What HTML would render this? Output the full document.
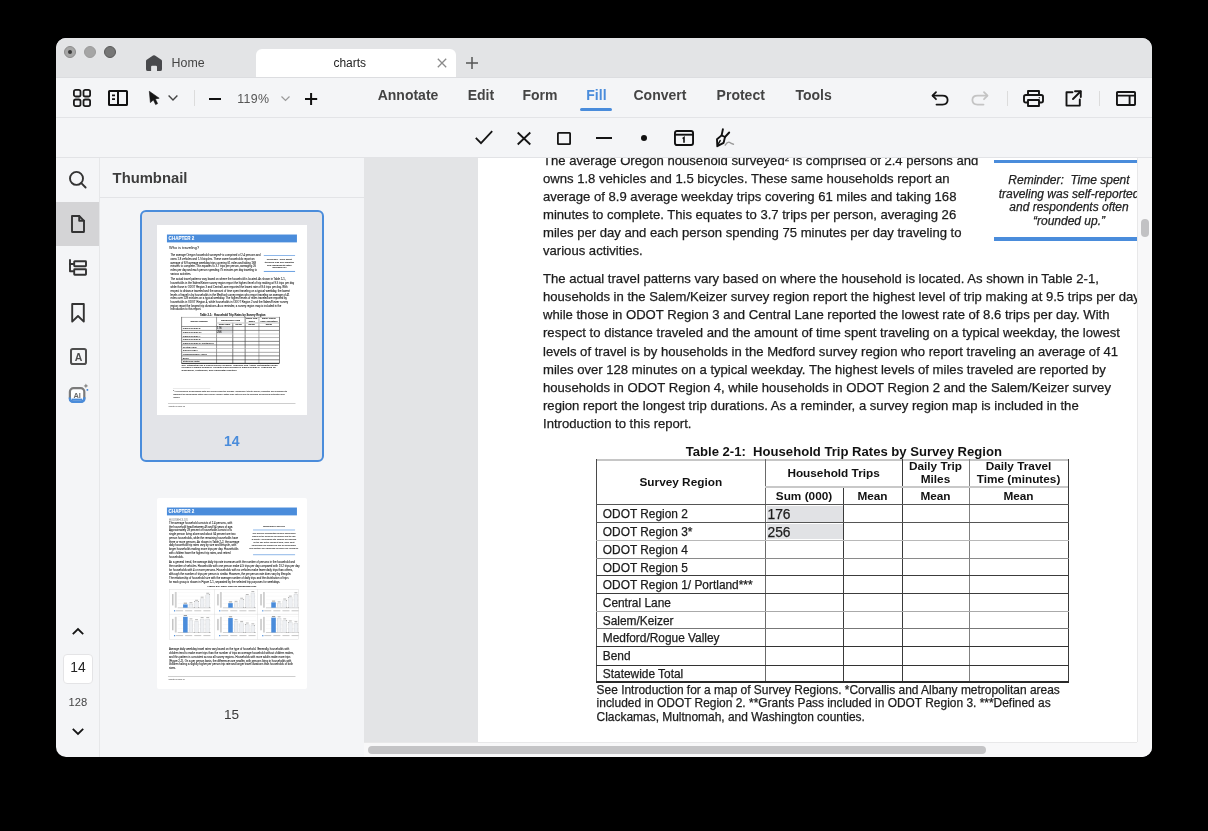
<!DOCTYPE html>
<html><head><meta charset="utf-8">
<style>
*{margin:0;padding:0;box-sizing:border-box}
html,body{width:1208px;height:831px;background:#000;overflow:hidden;font-family:"Liberation Sans",sans-serif}
#win{position:absolute;left:56px;top:38px;width:1096px;height:719px;border-radius:10px;overflow:hidden;background:#f4f5f7}
#in{position:absolute;left:-56px;top:-38px;width:1208px;height:831px;will-change:transform}
.a{position:absolute}
.t{position:absolute;white-space:nowrap;line-height:1}
svg{position:absolute;overflow:visible}
.th .t{-webkit-text-stroke:0.3px currentColor}
.pg .t:not([style*="font-weight:bold"]){-webkit-text-stroke:0.25px currentColor}
</style></head><body>
<div id="win"><div id="in">
<div class="a" style="left:56px;top:38px;width:1096px;height:40px;background:#e3e4e6;"></div>
<div class="a" style="left:56px;top:77px;width:1096px;height:1px;background:#dcdde0;"></div>
<div class="a" style="left:64px;top:46px;width:12px;height:12px;border-radius:50%;background:#a6a6a6;border:1px solid #8c8c8c"></div>
<div class="a" style="left:68px;top:50px;width:4px;height:4px;border-radius:50%;background:#3a3a3a"></div>
<div class="a" style="left:84px;top:46px;width:12px;height:12px;border-radius:50%;background:#a5a5a5;border:1px solid #9b9b9b"></div>
<div class="a" style="left:104px;top:46px;width:12px;height:12px;border-radius:50%;background:#767676;border:1px solid #595959"></div>
<svg style="left:146px;top:54.7px" width="16" height="16.2" viewBox="0 0 16 16.2"><path d="M7 0.5 Q8 -0.2 9 0.5 L15.3 4.8 Q16 5.3 16 6.2 V14.2 Q16 16.1 14.1 16.1 H11 V11.8 Q11 10.7 9.9 10.7 H6.1 Q5.1 10.7 5.1 11.8 V16.1 H1.9 Q0 16.1 0 14.2 V6.2 Q0 5.3 0.7 4.8 Z" fill="#48494c"/></svg>
<div class="t" style="left:171.60px;top:56.50px;font-size:12.4px;color:#444;font-weight:normal;font-style:normal;">Home</div>
<div class="a" style="left:256px;top:49px;width:200px;height:28px;background:#ffffff;border-radius:6px 6px 0 0"></div>
<div class="t" style="left:333.40px;top:57.04px;font-size:12px;color:#222;font-weight:normal;font-style:normal;">charts</div>
<svg style="left:437px;top:58px" width="10" height="10" viewBox="0 0 10 10"><path d="M0.8 0.8 L9.2 9.2 M9.2 0.8 L0.8 9.2" stroke="#8a8a8a" stroke-width="1.3" fill="none"/></svg>
<svg style="left:466px;top:57px" width="12" height="12" viewBox="0 0 12 12"><path d="M6 0 V12 M0 6 H12" stroke="#555" stroke-width="1.5" fill="none"/></svg>
<div class="a" style="left:56px;top:117px;width:1096px;height:1px;background:#e3e4e7;"></div>
<svg style="left:73px;top:89px" width="18" height="18" viewBox="0 0 18 18" fill="none" stroke="#1a1a1a" stroke-width="1.8"><rect x="0.9" y="0.9" width="6.6" height="6.6" rx="1.8"/><rect x="10.5" y="0.9" width="6.6" height="6.6" rx="1.8"/><rect x="0.9" y="10.5" width="6.6" height="6.6" rx="1.8"/><rect x="10.5" y="10.5" width="6.6" height="6.6" rx="1.8"/></svg>
<svg style="left:108px;top:90px" width="20" height="16" viewBox="0 0 20 16" fill="none" stroke="#111" stroke-width="2"><rect x="1" y="1" width="18" height="14" rx="0.6"/><path d="M10 1 V15"/><path d="M4 5.4 H7 M4 9.1 H7" stroke-width="1.6"/></svg>
<svg style="left:149px;top:91px" width="11" height="14" viewBox="0 0 11 14"><path d="M0.3 0.3 L10.2 7.2 L6.3 7.9 L8.6 12.6 L6.6 13.6 L4.4 8.9 L1.4 11.6 Z" fill="#151515" stroke="#151515" stroke-width="0.6" stroke-linejoin="round"/></svg>
<svg style="left:167.5px;top:95.4px" width="10" height="5.5" viewBox="0 0 10 5.5"><path d="M0.6 0.6 L5 5 L9.4 0.6" stroke="#444" stroke-width="1.4" fill="none"/></svg>
<div class="a" style="left:193.5px;top:90px;width:1px;height:15.5px;background:#dcdcdc;"></div>
<div class="a" style="left:208.7px;top:97.6px;width:12.3px;height:2.1px;background:#111;"></div>
<div class="t" style="left:237.30px;top:92.80px;font-size:12.4px;color:#555;font-weight:normal;font-style:normal;letter-spacing:0.3px">119%</div>
<svg style="left:280.5px;top:95.7px" width="9" height="5" viewBox="0 0 9 5"><path d="M0.5 0.5 L4.5 4.5 L8.5 0.5" stroke="#9a9a9a" stroke-width="1.2" fill="none"/></svg>
<svg style="left:304.8px;top:92.6px" width="12.2" height="12" viewBox="0 0 12.2 12"><path d="M6.1 0 V12 M0 6 H12.2" stroke="#111" stroke-width="2" fill="none"/></svg>
<div class="t" style="left:377.70px;top:88.15px;font-size:14px;color:#444;font-weight:bold;font-style:normal;">Annotate</div>
<div class="t" style="left:467.70px;top:88.15px;font-size:14px;color:#444;font-weight:bold;font-style:normal;">Edit</div>
<div class="t" style="left:522.50px;top:88.15px;font-size:14px;color:#444;font-weight:bold;font-style:normal;">Form</div>
<div class="t" style="left:633.50px;top:88.15px;font-size:14px;color:#444;font-weight:bold;font-style:normal;">Convert</div>
<div class="t" style="left:716.60px;top:88.15px;font-size:14px;color:#444;font-weight:bold;font-style:normal;">Protect</div>
<div class="t" style="left:795.50px;top:88.15px;font-size:14px;color:#444;font-weight:bold;font-style:normal;">Tools</div>
<div class="t" style="left:586.30px;top:88.15px;font-size:14px;color:#4a8cdb;font-weight:bold;font-style:normal;">Fill</div>
<div class="a" style="left:580px;top:108px;width:32px;height:3px;background:#4a8cdb;border-radius:1.5px"></div>
<svg style="left:931px;top:91px" width="18" height="15" viewBox="0 0 18 15" fill="none" stroke="#151515" stroke-width="1.8" stroke-linecap="round" stroke-linejoin="round"><path d="M5 1.2 L1.5 4.7 L5 8.2"/><path d="M1.8 4.7 H11.5 Q16.6 4.7 16.6 9.1 Q16.6 13.6 11.5 13.6 H5.5"/></svg>
<svg style="left:971px;top:91px" width="18" height="15" viewBox="0 0 18 15" fill="none" stroke="#c4c4c4" stroke-width="1.8" stroke-linecap="round" stroke-linejoin="round"><path d="M13 1.2 L16.5 4.7 L13 8.2"/><path d="M16.2 4.7 H6.5 Q1.4 4.7 1.4 9.1 Q1.4 13.6 6.5 13.6 H12.5"/></svg>
<div class="a" style="left:1006.5px;top:90.5px;width:1px;height:15px;background:#dcdcdc;"></div>
<svg style="left:1022.5px;top:89.5px" width="21" height="17" viewBox="0 0 21 17" fill="none" stroke="#151515" stroke-width="1.9" stroke-linejoin="round"><path d="M5 5 V1 H16 V5"/><path d="M5 12.5 H2.8 Q1 12.5 1 10.7 V6.8 Q1 5 2.8 5 H18.2 Q20 5 20 6.8 V10.7 Q20 12.5 18.2 12.5 H16"/><rect x="5" y="10" width="11" height="6"/><circle cx="16.3" cy="7.8" r="0.7" fill="#151515" stroke="none"/></svg>
<svg style="left:1065px;top:89.5px" width="17" height="17" viewBox="0 0 17 17" fill="none" stroke="#151515" stroke-width="1.9" stroke-linejoin="round" stroke-linecap="round"><path d="M7.5 2.3 H1.5 V15.6 H14.8 V9.5"/><path d="M8 9 L15.5 1.5"/><path d="M10 1.2 H15.8 V7"/></svg>
<div class="a" style="left:1099px;top:90.5px;width:1px;height:15px;background:#dcdcdc;"></div>
<svg style="left:1116px;top:90.5px" width="20" height="15" viewBox="0 0 20 15" fill="none" stroke="#151515" stroke-width="1.9"><rect x="0.95" y="0.95" width="18.1" height="13.1" rx="0.8"/><path d="M1 4.6 H19 M13.6 4.6 V14"/></svg>
<div class="a" style="left:56px;top:157px;width:1096px;height:1px;background:#e2e3e6;"></div>
<svg style="left:475px;top:130px" width="18" height="15" viewBox="0 0 18 15"><path d="M0.8 7.8 L6 13.2 L17.2 1.2" stroke="#151515" stroke-width="1.8" fill="none"/></svg>
<svg style="left:517px;top:131.5px" width="14" height="13" viewBox="0 0 14 13"><path d="M0.7 0.5 L13.3 12.5 M13.3 0.5 L0.7 12.5" stroke="#151515" stroke-width="1.8" fill="none"/></svg>
<svg style="left:557px;top:131.5px" width="14" height="13" viewBox="0 0 14 13"><rect x="0.9" y="0.9" width="12.2" height="11.2" rx="0.6" stroke="#151515" stroke-width="1.8" fill="none"/></svg>
<div class="a" style="left:596px;top:136.9px;width:16.2px;height:1.9px;background:#151515;"></div>
<div class="a" style="left:641px;top:135px;width:6px;height:6px;border-radius:50%;background:#111"></div>
<svg style="left:674px;top:130px" width="20" height="16" viewBox="0 0 20 16" fill="none" stroke="#111" stroke-width="1.9"><rect x="0.95" y="0.95" width="18.1" height="14.1" rx="2"/><path d="M1 4.7 H19"/><path d="M8.6 8.6 L10 7.6 V12.8" stroke-width="1.6"/></svg>
<svg style="left:710px;top:125px" width="30" height="25" viewBox="0 0 30 25" fill="none" stroke-linecap="round" stroke-linejoin="round"><path d="M12.9 4.2 L11.6 10.4 M19.2 7.5 L15 12" stroke="#111" stroke-width="1.9"/><path d="M11.6 10.4 L15 12 L13.6 17.8 L7.3 21.2 L7 14.3 Z" stroke="#111" stroke-width="1.9"/><path d="M10.2 15.6 L7.9 19.6" stroke="#111" stroke-width="1.5"/><path d="M15.2 20.2 Q17.6 16.4 19.4 17.3 Q21 18.8 23.5 19.2" stroke="#9a9a9a" stroke-width="1.4"/></svg>
<div class="a" style="left:99px;top:158px;width:1px;height:599px;background:#e6e7e9;"></div>
<div class="a" style="left:56px;top:202px;width:43px;height:44px;background:#d4d4d6;"></div>
<svg style="left:69px;top:171px" width="18" height="18" viewBox="0 0 18 18" fill="none" stroke="#333" stroke-width="1.9" stroke-linecap="round" stroke-linejoin="round"><circle cx="7.5" cy="7.4" r="6.5"/><path d="M12.3 12.2 L16.6 16.5"/></svg>
<svg style="left:71px;top:214.8px" width="14" height="18" viewBox="0 0 14 18" fill="none" stroke="#333" stroke-width="1.9" stroke-linecap="round" stroke-linejoin="round"><path d="M1 1 H8.2 L13 5.8 V16.4 Q13 17 12.4 17 H1.6 Q1 17 1 16.4 Z"/><path d="M8.2 1 V5.8 H13" /></svg>
<svg style="left:69px;top:258.8px" width="18" height="17" viewBox="0 0 18 17" fill="none" stroke="#333" stroke-width="1.9" stroke-linecap="round" stroke-linejoin="round"><path d="M1 1 V12.2 H4.3"/><path d="M1 5 H4.3"/><rect x="5.2" y="2.3" width="11.8" height="5" rx="0.5"/><rect x="5.2" y="10.2" width="11.8" height="5.6" rx="0.5"/></svg>
<svg style="left:71px;top:303px" width="14" height="19" viewBox="0 0 14 19" fill="none" stroke="#333" stroke-width="1.9" stroke-linecap="round" stroke-linejoin="round"><path d="M1.2 1 H12.8 V18.6 L7 13 L1.2 18.6 Z"/></svg>
<svg style="left:69.5px;top:347.5px" width="17" height="17" viewBox="0 0 17 17"><rect x="1" y="1" width="15" height="15" rx="1.8" fill="none" stroke="#4e4e4e" stroke-width="2"/><text x="8.5" y="12.6" font-family="Liberation Sans" font-weight="bold" font-size="10.5" fill="#4e4e4e" text-anchor="middle">A</text></svg>
<svg style="left:64px;top:380px" width="28" height="26" viewBox="0 0 28 26"><rect x="5.9" y="8.2" width="14.4" height="13.6" rx="3.6" fill="#fff" stroke="#7b7b7b" stroke-width="2.2"/><path d="M5.9 17.4 V18.6 Q5.9 21.8 9.4 21.8 H16.8 Q20.3 21.8 20.3 18.6 V17.2" fill="none" stroke="#4a8cdb" stroke-width="2.4"/><path d="M8 19.6 H18.2" stroke="#4a8cdb" stroke-width="2"/><text x="13.1" y="17.9" font-family="Liberation Sans" font-weight="bold" font-size="7.4" fill="#6a6a6a" text-anchor="middle">AI</text><path d="M21.9 3.6 Q22.2 5.6 24.2 5.9 Q22.2 6.2 21.9 8.2 Q21.6 6.2 19.6 5.9 Q21.6 5.6 21.9 3.6 Z" fill="#8a8a8a"/><rect x="22.6" y="9" width="1.6" height="1.8" fill="#4a8cdb"/></svg>
<svg style="left:72px;top:628px" width="12" height="7" viewBox="0 0 12 7"><path d="M0.8 6.2 L6 1 L11.2 6.2" stroke="#151515" stroke-width="1.8" fill="none"/></svg>
<div class="a" style="left:62.7px;top:653.5px;width:30.4px;height:30.7px;background:#fff;border:1px solid #e4e4e6;border-radius:4px"></div>
<div class="t" style="left:-222.00px;width:600px;text-align:center;top:661.22px;font-size:13.8px;color:#222;font-weight:normal;font-style:normal;">14</div>
<div class="t" style="left:-222.20px;width:600px;text-align:center;top:696.62px;font-size:11.2px;color:#454545;font-weight:normal;font-style:normal;">128</div>
<svg style="left:72px;top:728px" width="12" height="7" viewBox="0 0 12 7"><path d="M0.8 0.8 L6 6 L11.2 0.8" stroke="#151515" stroke-width="1.8" fill="none"/></svg>
<div class="a" style="left:100px;top:197px;width:264px;height:1px;background:#e3e4e7;"></div>
<div class="t" style="left:112.60px;top:170.67px;font-size:14.8px;color:#3d3d3d;font-weight:bold;font-style:normal;">Thumbnail</div>
<div class="a" style="left:140px;top:210px;width:184px;height:252px;background:#e3e4e8;border:2px solid #4a8cdb;border-radius:6px"></div>
<div class="t" style="left:-68.30px;width:600px;text-align:center;top:433.95px;font-size:14px;color:#4a8cdb;font-weight:bold;font-style:normal;">14</div>
<div class="a" style="left:157px;top:224.5px;width:150px;height:190.5px;overflow:hidden;background:#fff;border-radius:0px"><div class="a th" style="left:0;top:0;width:1208px;height:1000px;transform-origin:0 0;transform:scale(0.207) translate(-478px,-15px)"><div class="a" style="left:526px;top:61px;width:628px;height:38px;background:#4a8cdb;"></div>
<div class="t" style="left:534.00px;top:69.38px;font-size:22px;color:#fff;font-weight:bold;font-style:normal;">CHAPTER 2</div>
<div class="t" style="left:536.00px;top:116.92px;font-size:19px;color:#333;font-weight:normal;font-style:normal;">Who is traveling?</div>
<div class="t" style="left:543.00px;top:153.71px;font-size:13.1px;color:#1c1c1c;font-weight:normal;font-style:normal;">The average Oregon household surveyed<sup style="font-size:8px;vertical-align:4px">2</sup> is comprised of 2.4 persons and</div>
<div class="t" style="left:543.00px;top:171.76px;font-size:13.1px;color:#1c1c1c;font-weight:normal;font-style:normal;">owns 1.8 vehicles and 1.5 bicycles. These same households report an</div>
<div class="t" style="left:543.00px;top:189.81px;font-size:13.1px;color:#1c1c1c;font-weight:normal;font-style:normal;">average of 8.9 average weekday trips covering 61 miles and taking 168</div>
<div class="t" style="left:543.00px;top:207.86px;font-size:13.1px;color:#1c1c1c;font-weight:normal;font-style:normal;">minutes to complete. This equates to 3.7 trips per person, averaging 26</div>
<div class="t" style="left:543.00px;top:225.91px;font-size:13.1px;color:#1c1c1c;font-weight:normal;font-style:normal;">miles per day and each person spending 75 minutes per day traveling to</div>
<div class="t" style="left:543.00px;top:243.96px;font-size:13.1px;color:#1c1c1c;font-weight:normal;font-style:normal;">various activities.</div>
<div class="t" style="left:543.00px;top:272.31px;font-size:13.1px;color:#1c1c1c;font-weight:normal;font-style:normal;">The actual travel patterns vary based on where the household is located. As shown in Table 2-1,</div>
<div class="t" style="left:543.00px;top:290.36px;font-size:13.1px;color:#1c1c1c;font-weight:normal;font-style:normal;">households in the Salem/Keizer survey region report the highest level of trip making at 9.5 trips per day</div>
<div class="t" style="left:543.00px;top:308.41px;font-size:13.1px;color:#1c1c1c;font-weight:normal;font-style:normal;">while those in ODOT Region 3 and Central Lane reported the lowest rate of 8.6 trips per day. With</div>
<div class="t" style="left:543.00px;top:326.46px;font-size:13.1px;color:#1c1c1c;font-weight:normal;font-style:normal;">respect to distance traveled and the amount of time spent traveling on a typical weekday, the lowest</div>
<div class="t" style="left:543.00px;top:344.51px;font-size:13.1px;color:#1c1c1c;font-weight:normal;font-style:normal;">levels of travel is by households in the Medford survey region who report traveling an average of 41</div>
<div class="t" style="left:543.00px;top:362.56px;font-size:13.1px;color:#1c1c1c;font-weight:normal;font-style:normal;">miles over 128 minutes on a typical weekday. The highest levels of miles traveled are reported by</div>
<div class="t" style="left:543.00px;top:380.61px;font-size:13.1px;color:#1c1c1c;font-weight:normal;font-style:normal;">households in ODOT Region 4, while households in ODOT Region 2 and the Salem/Keizer survey</div>
<div class="t" style="left:543.00px;top:398.66px;font-size:13.1px;color:#1c1c1c;font-weight:normal;font-style:normal;">region report the longest trip durations. As a reminder, a survey region map is included in the</div>
<div class="t" style="left:543.00px;top:416.71px;font-size:13.1px;color:#1c1c1c;font-weight:normal;font-style:normal;">Introduction to this report.</div>
<div class="a" style="left:994px;top:160px;width:151px;height:3px;background:#4a8cdb;"></div>
<div class="a" style="left:994px;top:237.3px;width:151px;height:3.5px;background:#4a8cdb;"></div>
<div class="t" style="left:769.00px;width:600px;text-align:center;top:174.04px;font-size:12px;color:#222;font-weight:normal;font-style:italic;">Reminder:&nbsp; Time spent</div>
<div class="t" style="left:769.00px;width:600px;text-align:center;top:187.74px;font-size:12px;color:#222;font-weight:normal;font-style:italic;">traveling was self-reported</div>
<div class="t" style="left:769.00px;width:600px;text-align:center;top:201.44px;font-size:12px;color:#222;font-weight:normal;font-style:italic;">and respondents often</div>
<div class="t" style="left:769.00px;width:600px;text-align:center;top:215.14px;font-size:12px;color:#222;font-weight:normal;font-style:italic;">&ldquo;rounded up.&rdquo;</div>
<div class="t" style="left:685.70px;top:444.81px;font-size:13.1px;color:#111;font-weight:bold;font-style:normal;">Table 2-1:&nbsp; Household Trip Rates by Survey Region</div>
<div class="a" style="left:767px;top:505.5px;width:76px;height:16px;background:#e1e2e5;"></div>
<div class="a" style="left:767px;top:523.5px;width:76px;height:15.5px;background:#e1e2e5;"></div>
<div class="a" style="left:596px;top:459px;width:473px;height:5.0px;background:#c6c6c6;"></div>
<div class="a" style="left:596px;top:459px;width:2.5px;height:224px;background:#4a4a4a;"></div>
<div class="a" style="left:1068px;top:459px;width:2.5px;height:224px;background:#3a3a3a;"></div>
<div class="a" style="left:765px;top:459px;width:2.5px;height:224px;background:#6a6a6a;"></div>
<div class="a" style="left:843px;top:487px;width:2.5px;height:196px;background:#3a3a3a;"></div>
<div class="a" style="left:902px;top:459px;width:2.5px;height:224px;background:#3a3a3a;"></div>
<div class="a" style="left:969px;top:459px;width:2.5px;height:224px;background:#808080;"></div>
<div class="a" style="left:765px;top:486px;width:303px;height:5.0px;background:#c8c8c8;"></div>
<div class="a" style="left:596px;top:504px;width:473px;height:2.5px;background:#555;"></div>
<div class="a" style="left:596px;top:522px;width:473px;height:2.5px;background:#555;"></div>
<div class="a" style="left:596px;top:540px;width:473px;height:2.5px;background:#b8b8b8;"></div>
<div class="a" style="left:596px;top:558px;width:473px;height:2.5px;background:#8a8a8a;"></div>
<div class="a" style="left:596px;top:575px;width:473px;height:2.5px;background:#3c3c3c;"></div>
<div class="a" style="left:596px;top:593px;width:473px;height:2.5px;background:#3c3c3c;"></div>
<div class="a" style="left:596px;top:611px;width:473px;height:2.5px;background:#aaaaaa;"></div>
<div class="a" style="left:596px;top:628px;width:473px;height:2.5px;background:#777;"></div>
<div class="a" style="left:596px;top:646px;width:473px;height:2.5px;background:#333;"></div>
<div class="a" style="left:596px;top:665px;width:473px;height:2.5px;background:#333;"></div>
<div class="a" style="left:596px;top:681px;width:473px;height:5.0px;background:#2a2a2a;"></div>
<div class="t" style="left:380.80px;width:600px;text-align:center;top:476.91px;font-size:11.8px;color:#111;font-weight:bold;font-style:normal;">Survey Region</div>
<div class="t" style="left:533.60px;width:600px;text-align:center;top:468.11px;font-size:11.8px;color:#111;font-weight:bold;font-style:normal;">Household Trips</div>
<div class="t" style="left:504.00px;width:600px;text-align:center;top:491.11px;font-size:11.8px;color:#111;font-weight:bold;font-style:normal;">Sum (000)</div>
<div class="t" style="left:572.50px;width:600px;text-align:center;top:491.11px;font-size:11.8px;color:#111;font-weight:bold;font-style:normal;">Mean</div>
<div class="t" style="left:635.50px;width:600px;text-align:center;top:460.91px;font-size:11.8px;color:#111;font-weight:bold;font-style:normal;">Daily Trip</div>
<div class="t" style="left:635.50px;width:600px;text-align:center;top:474.31px;font-size:11.8px;color:#111;font-weight:bold;font-style:normal;">Miles</div>
<div class="t" style="left:718.50px;width:600px;text-align:center;top:460.91px;font-size:11.8px;color:#111;font-weight:bold;font-style:normal;">Daily Travel</div>
<div class="t" style="left:718.50px;width:600px;text-align:center;top:474.31px;font-size:11.8px;color:#111;font-weight:bold;font-style:normal;">Time (minutes)</div>
<div class="t" style="left:635.50px;width:600px;text-align:center;top:491.11px;font-size:11.8px;color:#111;font-weight:bold;font-style:normal;">Mean</div>
<div class="t" style="left:718.50px;width:600px;text-align:center;top:491.11px;font-size:11.8px;color:#111;font-weight:bold;font-style:normal;">Mean</div>
<div class="t" style="left:602.80px;top:509.03px;font-size:11.9px;color:#1c1c1c;font-weight:normal;font-style:normal;">ODOT Region 2</div>
<div class="t" style="left:602.80px;top:527.03px;font-size:11.9px;color:#1c1c1c;font-weight:normal;font-style:normal;">ODOT Region 3*</div>
<div class="t" style="left:602.80px;top:544.83px;font-size:11.9px;color:#1c1c1c;font-weight:normal;font-style:normal;">ODOT Region 4</div>
<div class="t" style="left:602.80px;top:562.53px;font-size:11.9px;color:#1c1c1c;font-weight:normal;font-style:normal;">ODOT Region 5</div>
<div class="t" style="left:602.80px;top:580.33px;font-size:11.9px;color:#1c1c1c;font-weight:normal;font-style:normal;">ODOT Region 1/ Portland***</div>
<div class="t" style="left:602.80px;top:597.93px;font-size:11.9px;color:#1c1c1c;font-weight:normal;font-style:normal;">Central Lane</div>
<div class="t" style="left:602.80px;top:615.53px;font-size:11.9px;color:#1c1c1c;font-weight:normal;font-style:normal;">Salem/Keizer</div>
<div class="t" style="left:602.80px;top:633.13px;font-size:11.9px;color:#1c1c1c;font-weight:normal;font-style:normal;">Medford/Rogue Valley</div>
<div class="t" style="left:602.80px;top:651.23px;font-size:11.9px;color:#1c1c1c;font-weight:normal;font-style:normal;">Bend</div>
<div class="t" style="left:602.80px;top:668.93px;font-size:11.9px;color:#1c1c1c;font-weight:normal;font-style:normal;">Statewide Total</div>
<div class="t" style="left:767.50px;top:507.82px;font-size:13.8px;color:#1c1c1c;font-weight:normal;font-style:normal;">176</div>
<div class="t" style="left:767.50px;top:525.62px;font-size:13.8px;color:#1c1c1c;font-weight:normal;font-style:normal;">256</div>
<div class="t" style="left:596.60px;top:684.78px;font-size:11.95px;color:#1c1c1c;font-weight:normal;font-style:normal;">See Introduction for a map of Survey Regions. *Corvallis and Albany metropolitan areas</div>
<div class="t" style="left:596.60px;top:698.48px;font-size:11.95px;color:#1c1c1c;font-weight:normal;font-style:normal;">included in ODOT Region 2. **Grants Pass included in ODOT Region 3. ***Defined as</div>
<div class="t" style="left:596.60px;top:712.18px;font-size:11.95px;color:#1c1c1c;font-weight:normal;font-style:normal;">Clackamas, Multnomah, and Washington counties.</div>
<div class="a" style="left:555px;top:805px;width:180px;height:1px;background:#999;"></div>
<div class="t" style="left:556.00px;top:813.03px;font-size:10.6px;color:#333;font-weight:normal;font-style:normal;"><sup style="font-size:6px">2</sup> All summaries of household data are derived from the Oregon Household Activity Survey, weighted and expanded to</div>
<div class="t" style="left:556.00px;top:827.03px;font-size:10.6px;color:#333;font-weight:normal;font-style:normal;">represent all households within each survey region. Totals may not sum due to rounding of individual estimates and</div>
<div class="t" style="left:556.00px;top:841.03px;font-size:10.6px;color:#333;font-weight:normal;font-style:normal;">values.</div>
<div class="a" style="left:531px;top:877px;width:616px;height:1.5px;background:#888;"></div>
<div class="t" style="left:534.00px;top:887.96px;font-size:9.5px;color:#777;font-weight:normal;font-style:normal;">Chapter 2 Page 13</div>
</div></div>
<div class="a" style="left:157px;top:497.5px;width:150px;height:191px;overflow:hidden;background:#fff;border-radius:2px"><div class="a th" style="left:0;top:0;width:1208px;height:1000px;transform-origin:0 0;transform:scale(0.207) translate(-478px,-15px)"><div class="a" style="left:526px;top:61px;width:628px;height:38px;background:#4a8cdb;"></div>
<div class="t" style="left:534.00px;top:69.38px;font-size:22px;color:#fff;font-weight:bold;font-style:normal;">CHAPTER 2</div>
<div class="t" style="left:536.00px;top:115.00px;font-size:13px;color:#999;font-weight:normal;font-style:normal;">HOUSEHOLDS</div>
<div class="t" style="left:536.00px;top:128.91px;font-size:13.1px;color:#1c1c1c;font-weight:normal;font-style:normal;">The average household consists of 2.4 persons, with</div>
<div class="t" style="left:536.00px;top:147.01px;font-size:13.1px;color:#1c1c1c;font-weight:normal;font-style:normal;">the household head between 45 and 54 years of age.</div>
<div class="t" style="left:536.00px;top:165.11px;font-size:13.1px;color:#1c1c1c;font-weight:normal;font-style:normal;">Approximately 28 percent of households consist of a</div>
<div class="t" style="left:536.00px;top:183.21px;font-size:13.1px;color:#1c1c1c;font-weight:normal;font-style:normal;">single person living alone and about 34 percent are two</div>
<div class="t" style="left:536.00px;top:201.31px;font-size:13.1px;color:#1c1c1c;font-weight:normal;font-style:normal;">person households, while the remaining households have</div>
<div class="t" style="left:536.00px;top:219.41px;font-size:13.1px;color:#1c1c1c;font-weight:normal;font-style:normal;">three or more persons. As shown in Table 2-2, the average</div>
<div class="t" style="left:536.00px;top:237.51px;font-size:13.1px;color:#1c1c1c;font-weight:normal;font-style:normal;">daily household trip rates vary by size and lifecycle, with</div>
<div class="t" style="left:536.00px;top:255.61px;font-size:13.1px;color:#1c1c1c;font-weight:normal;font-style:normal;">larger households making more trips per day. Households</div>
<div class="t" style="left:536.00px;top:273.71px;font-size:13.1px;color:#1c1c1c;font-weight:normal;font-style:normal;">with children have the highest trip rates, and retired</div>
<div class="t" style="left:536.00px;top:291.81px;font-size:13.1px;color:#1c1c1c;font-weight:normal;font-style:normal;">households.</div>
<div class="t" style="left:743.00px;width:600px;text-align:center;top:145.69px;font-size:11px;color:#333;font-weight:normal;font-style:normal;"><b>Household Lifecycle</b></div>
<div class="a" style="left:942px;top:168px;width:203px;height:3px;background:#4a8cdb;"></div>
<div class="a" style="left:942px;top:288px;width:203px;height:3px;background:#4a8cdb;"></div>
<div class="t" style="left:743.00px;width:600px;text-align:center;top:179.37px;font-size:10.2px;color:#333;font-weight:normal;font-style:normal;">The lifecycle classification defines households</div>
<div class="t" style="left:743.00px;width:600px;text-align:center;top:194.57px;font-size:10.2px;color:#333;font-weight:normal;font-style:normal;">based on the presence of children and the age</div>
<div class="t" style="left:743.00px;width:600px;text-align:center;top:209.77px;font-size:10.2px;color:#333;font-weight:normal;font-style:normal;">of adults. Households with children are grouped</div>
<div class="t" style="left:743.00px;width:600px;text-align:center;top:224.97px;font-size:10.2px;color:#333;font-weight:normal;font-style:normal;">by the age of the youngest child, while adult</div>
<div class="t" style="left:743.00px;width:600px;text-align:center;top:240.17px;font-size:10.2px;color:#333;font-weight:normal;font-style:normal;">households are grouped by age of householder</div>
<div class="t" style="left:743.00px;width:600px;text-align:center;top:255.37px;font-size:10.2px;color:#333;font-weight:normal;font-style:normal;">and whether any household members are employed.</div>
<div class="t" style="left:536.00px;top:318.91px;font-size:13.1px;color:#1c1c1c;font-weight:normal;font-style:normal;">As a general trend, the average daily trip rate increases with the number of persons in the household and</div>
<div class="t" style="left:536.00px;top:337.91px;font-size:13.1px;color:#1c1c1c;font-weight:normal;font-style:normal;">the number of vehicles. Households with one person make 4.5 trips per day compared with 13.2 trips per day</div>
<div class="t" style="left:536.00px;top:356.91px;font-size:13.1px;color:#1c1c1c;font-weight:normal;font-style:normal;">for households with 4 or more persons. Households with no vehicles make fewer daily trips than others,</div>
<div class="t" style="left:536.00px;top:375.91px;font-size:13.1px;color:#1c1c1c;font-weight:normal;font-style:normal;">although the number of trips per person is similar. However, the per person rate does vary by lifecycle.</div>
<div class="t" style="left:536.00px;top:394.91px;font-size:13.1px;color:#1c1c1c;font-weight:normal;font-style:normal;">The relationship of household size with the average number of daily trips and the distribution of trips</div>
<div class="t" style="left:536.00px;top:413.91px;font-size:13.1px;color:#1c1c1c;font-weight:normal;font-style:normal;">for each group is shown in Figure 2-1, separated by the selected trip purposes for weekdays.</div>
<div class="t" style="left:540.00px;width:600px;text-align:center;top:434.84px;font-size:12px;color:#222;font-weight:normal;font-style:normal;"><b>Figure 2-1:  Daily Trips by Household Size</b></div>
<div class="a" style="left:538px;top:455px;width:624px;height:244px;background:#fff;border:2px solid #d6d6d6"></div>
<div class="a" style="left:756px;top:455px;width:2px;height:244px;background:#d6d6d6;"></div>
<div class="a" style="left:963.5px;top:455px;width:2px;height:244px;background:#d6d6d6;"></div>
<div class="a" style="left:538px;top:575px;width:624px;height:2px;background:#d6d6d6;"></div>
<div class="a" style="left:552px;top:479px;width:5px;height:55px;background:#aaa;"></div>
<div class="a" style="left:564px;top:469px;width:9px;height:76px;background:#d0d0d0;"></div>
<div class="a" style="left:578px;top:469px;width:160px;height:1px;background:#e4e4e4;"></div>
<div class="a" style="left:578px;top:488px;width:160px;height:1px;background:#e4e4e4;"></div>
<div class="a" style="left:578px;top:507px;width:160px;height:1px;background:#e4e4e4;"></div>
<div class="a" style="left:578px;top:526px;width:160px;height:1px;background:#e4e4e4;"></div>
<div class="a" style="left:578px;top:545px;width:160px;height:1px;background:#e4e4e4;"></div>
<div class="a" style="left:578px;top:545px;width:160px;height:2px;background:#999;"></div>
<div class="a" style="left:604px;top:529px;width:22px;height:16px;background:#4a8cdb;"></div>
<div class="a" style="left:632px;top:527px;width:20px;height:18px;background:#eef0f3;border:2px dotted #b5b5b5"></div>
<div class="a" style="left:635px;top:519px;width:14px;height:4px;background:#aaa;"></div>
<div class="a" style="left:659px;top:515px;width:20px;height:30px;background:#eef0f3;border:2px dotted #b5b5b5"></div>
<div class="a" style="left:662px;top:507px;width:14px;height:4px;background:#aaa;"></div>
<div class="a" style="left:686px;top:500px;width:20px;height:45px;background:#eef0f3;border:2px dotted #b5b5b5"></div>
<div class="a" style="left:689px;top:492px;width:14px;height:4px;background:#aaa;"></div>
<div class="a" style="left:713px;top:481px;width:20px;height:64px;background:#eef0f3;border:2px dotted #b5b5b5"></div>
<div class="a" style="left:716px;top:473px;width:14px;height:4px;background:#aaa;"></div>
<div class="a" style="left:607px;top:521px;width:16px;height:4px;background:#888;"></div>
<div class="a" style="left:560px;top:557px;width:6px;height:6px;background:#4a8cdb;"></div>
<div class="a" style="left:570px;top:558px;width:34px;height:4px;background:#bbb;"></div>
<div class="a" style="left:614px;top:558px;width:34px;height:4px;background:#bbb;"></div>
<div class="a" style="left:658px;top:558px;width:34px;height:4px;background:#bbb;"></div>
<div class="a" style="left:702px;top:558px;width:34px;height:4px;background:#bbb;"></div>
<div class="a" style="left:770px;top:479px;width:5px;height:55px;background:#aaa;"></div>
<div class="a" style="left:782px;top:469px;width:9px;height:76px;background:#d0d0d0;"></div>
<div class="a" style="left:796px;top:469px;width:160px;height:1px;background:#e4e4e4;"></div>
<div class="a" style="left:796px;top:488px;width:160px;height:1px;background:#e4e4e4;"></div>
<div class="a" style="left:796px;top:507px;width:160px;height:1px;background:#e4e4e4;"></div>
<div class="a" style="left:796px;top:526px;width:160px;height:1px;background:#e4e4e4;"></div>
<div class="a" style="left:796px;top:545px;width:160px;height:1px;background:#e4e4e4;"></div>
<div class="a" style="left:796px;top:545px;width:160px;height:2px;background:#999;"></div>
<div class="a" style="left:822px;top:523px;width:22px;height:22px;background:#4a8cdb;"></div>
<div class="a" style="left:850px;top:520px;width:20px;height:25px;background:#eef0f3;border:2px dotted #b5b5b5"></div>
<div class="a" style="left:853px;top:512px;width:14px;height:4px;background:#aaa;"></div>
<div class="a" style="left:877px;top:505px;width:20px;height:40px;background:#eef0f3;border:2px dotted #b5b5b5"></div>
<div class="a" style="left:880px;top:497px;width:14px;height:4px;background:#aaa;"></div>
<div class="a" style="left:904px;top:487px;width:20px;height:58px;background:#eef0f3;border:2px dotted #b5b5b5"></div>
<div class="a" style="left:907px;top:479px;width:14px;height:4px;background:#aaa;"></div>
<div class="a" style="left:931px;top:473px;width:20px;height:72px;background:#eef0f3;border:2px dotted #b5b5b5"></div>
<div class="a" style="left:934px;top:465px;width:14px;height:4px;background:#aaa;"></div>
<div class="a" style="left:825px;top:515px;width:16px;height:4px;background:#888;"></div>
<div class="a" style="left:778px;top:557px;width:6px;height:6px;background:#4a8cdb;"></div>
<div class="a" style="left:788px;top:558px;width:34px;height:4px;background:#bbb;"></div>
<div class="a" style="left:832px;top:558px;width:34px;height:4px;background:#bbb;"></div>
<div class="a" style="left:876px;top:558px;width:34px;height:4px;background:#bbb;"></div>
<div class="a" style="left:920px;top:558px;width:34px;height:4px;background:#bbb;"></div>
<div class="a" style="left:977.5px;top:479px;width:5px;height:55px;background:#aaa;"></div>
<div class="a" style="left:989.5px;top:469px;width:9px;height:76px;background:#d0d0d0;"></div>
<div class="a" style="left:1003.5px;top:469px;width:160px;height:1px;background:#e4e4e4;"></div>
<div class="a" style="left:1003.5px;top:488px;width:160px;height:1px;background:#e4e4e4;"></div>
<div class="a" style="left:1003.5px;top:507px;width:160px;height:1px;background:#e4e4e4;"></div>
<div class="a" style="left:1003.5px;top:526px;width:160px;height:1px;background:#e4e4e4;"></div>
<div class="a" style="left:1003.5px;top:545px;width:160px;height:1px;background:#e4e4e4;"></div>
<div class="a" style="left:1003.5px;top:545px;width:160px;height:2px;background:#999;"></div>
<div class="a" style="left:1029.5px;top:519px;width:22px;height:26px;background:#4a8cdb;"></div>
<div class="a" style="left:1057.5px;top:523px;width:20px;height:22px;background:#eef0f3;border:2px dotted #b5b5b5"></div>
<div class="a" style="left:1060.5px;top:515px;width:14px;height:4px;background:#aaa;"></div>
<div class="a" style="left:1084.5px;top:509px;width:20px;height:36px;background:#eef0f3;border:2px dotted #b5b5b5"></div>
<div class="a" style="left:1087.5px;top:501px;width:14px;height:4px;background:#aaa;"></div>
<div class="a" style="left:1111.5px;top:495px;width:20px;height:50px;background:#eef0f3;border:2px dotted #b5b5b5"></div>
<div class="a" style="left:1114.5px;top:487px;width:14px;height:4px;background:#aaa;"></div>
<div class="a" style="left:1138.5px;top:479px;width:20px;height:66px;background:#eef0f3;border:2px dotted #b5b5b5"></div>
<div class="a" style="left:1141.5px;top:471px;width:14px;height:4px;background:#aaa;"></div>
<div class="a" style="left:1032.5px;top:511px;width:16px;height:4px;background:#888;"></div>
<div class="a" style="left:985.5px;top:557px;width:6px;height:6px;background:#4a8cdb;"></div>
<div class="a" style="left:995.5px;top:558px;width:34px;height:4px;background:#bbb;"></div>
<div class="a" style="left:1039.5px;top:558px;width:34px;height:4px;background:#bbb;"></div>
<div class="a" style="left:1083.5px;top:558px;width:34px;height:4px;background:#bbb;"></div>
<div class="a" style="left:1127.5px;top:558px;width:34px;height:4px;background:#bbb;"></div>
<div class="a" style="left:552px;top:599px;width:5px;height:55px;background:#aaa;"></div>
<div class="a" style="left:564px;top:589px;width:9px;height:76px;background:#d0d0d0;"></div>
<div class="a" style="left:578px;top:589px;width:160px;height:1px;background:#e4e4e4;"></div>
<div class="a" style="left:578px;top:608px;width:160px;height:1px;background:#e4e4e4;"></div>
<div class="a" style="left:578px;top:627px;width:160px;height:1px;background:#e4e4e4;"></div>
<div class="a" style="left:578px;top:646px;width:160px;height:1px;background:#e4e4e4;"></div>
<div class="a" style="left:578px;top:665px;width:160px;height:1px;background:#e4e4e4;"></div>
<div class="a" style="left:578px;top:665px;width:160px;height:2px;background:#999;"></div>
<div class="a" style="left:604px;top:589px;width:22px;height:76px;background:#4a8cdb;"></div>
<div class="a" style="left:632px;top:605px;width:20px;height:60px;background:#eef0f3;border:2px dotted #b5b5b5"></div>
<div class="a" style="left:635px;top:597px;width:14px;height:4px;background:#aaa;"></div>
<div class="a" style="left:659px;top:609px;width:20px;height:56px;background:#eef0f3;border:2px dotted #b5b5b5"></div>
<div class="a" style="left:662px;top:601px;width:14px;height:4px;background:#aaa;"></div>
<div class="a" style="left:686px;top:599px;width:20px;height:66px;background:#eef0f3;border:2px dotted #b5b5b5"></div>
<div class="a" style="left:689px;top:591px;width:14px;height:4px;background:#aaa;"></div>
<div class="a" style="left:713px;top:599px;width:20px;height:66px;background:#eef0f3;border:2px dotted #b5b5b5"></div>
<div class="a" style="left:716px;top:591px;width:14px;height:4px;background:#aaa;"></div>
<div class="a" style="left:607px;top:581px;width:16px;height:4px;background:#888;"></div>
<div class="a" style="left:560px;top:677px;width:6px;height:6px;background:#4a8cdb;"></div>
<div class="a" style="left:570px;top:678px;width:34px;height:4px;background:#bbb;"></div>
<div class="a" style="left:614px;top:678px;width:34px;height:4px;background:#bbb;"></div>
<div class="a" style="left:658px;top:678px;width:34px;height:4px;background:#bbb;"></div>
<div class="a" style="left:702px;top:678px;width:34px;height:4px;background:#bbb;"></div>
<div class="a" style="left:770px;top:599px;width:5px;height:55px;background:#aaa;"></div>
<div class="a" style="left:782px;top:589px;width:9px;height:76px;background:#d0d0d0;"></div>
<div class="a" style="left:796px;top:589px;width:160px;height:1px;background:#e4e4e4;"></div>
<div class="a" style="left:796px;top:608px;width:160px;height:1px;background:#e4e4e4;"></div>
<div class="a" style="left:796px;top:627px;width:160px;height:1px;background:#e4e4e4;"></div>
<div class="a" style="left:796px;top:646px;width:160px;height:1px;background:#e4e4e4;"></div>
<div class="a" style="left:796px;top:665px;width:160px;height:1px;background:#e4e4e4;"></div>
<div class="a" style="left:796px;top:665px;width:160px;height:2px;background:#999;"></div>
<div class="a" style="left:822px;top:595px;width:22px;height:70px;background:#4a8cdb;"></div>
<div class="a" style="left:850px;top:609px;width:20px;height:56px;background:#eef0f3;border:2px dotted #b5b5b5"></div>
<div class="a" style="left:853px;top:601px;width:14px;height:4px;background:#aaa;"></div>
<div class="a" style="left:877px;top:617px;width:20px;height:48px;background:#eef0f3;border:2px dotted #b5b5b5"></div>
<div class="a" style="left:880px;top:609px;width:14px;height:4px;background:#aaa;"></div>
<div class="a" style="left:904px;top:625px;width:20px;height:40px;background:#eef0f3;border:2px dotted #b5b5b5"></div>
<div class="a" style="left:907px;top:617px;width:14px;height:4px;background:#aaa;"></div>
<div class="a" style="left:931px;top:629px;width:20px;height:36px;background:#eef0f3;border:2px dotted #b5b5b5"></div>
<div class="a" style="left:934px;top:621px;width:14px;height:4px;background:#aaa;"></div>
<div class="a" style="left:825px;top:587px;width:16px;height:4px;background:#888;"></div>
<div class="a" style="left:778px;top:677px;width:6px;height:6px;background:#4a8cdb;"></div>
<div class="a" style="left:788px;top:678px;width:34px;height:4px;background:#bbb;"></div>
<div class="a" style="left:832px;top:678px;width:34px;height:4px;background:#bbb;"></div>
<div class="a" style="left:876px;top:678px;width:34px;height:4px;background:#bbb;"></div>
<div class="a" style="left:920px;top:678px;width:34px;height:4px;background:#bbb;"></div>
<div class="a" style="left:977.5px;top:599px;width:5px;height:55px;background:#aaa;"></div>
<div class="a" style="left:989.5px;top:589px;width:9px;height:76px;background:#d0d0d0;"></div>
<div class="a" style="left:1003.5px;top:589px;width:160px;height:1px;background:#e4e4e4;"></div>
<div class="a" style="left:1003.5px;top:608px;width:160px;height:1px;background:#e4e4e4;"></div>
<div class="a" style="left:1003.5px;top:627px;width:160px;height:1px;background:#e4e4e4;"></div>
<div class="a" style="left:1003.5px;top:646px;width:160px;height:1px;background:#e4e4e4;"></div>
<div class="a" style="left:1003.5px;top:665px;width:160px;height:1px;background:#e4e4e4;"></div>
<div class="a" style="left:1003.5px;top:665px;width:160px;height:2px;background:#999;"></div>
<div class="a" style="left:1029.5px;top:593px;width:22px;height:72px;background:#4a8cdb;"></div>
<div class="a" style="left:1057.5px;top:595px;width:20px;height:70px;background:#eef0f3;border:2px dotted #b5b5b5"></div>
<div class="a" style="left:1060.5px;top:587px;width:14px;height:4px;background:#aaa;"></div>
<div class="a" style="left:1084.5px;top:605px;width:20px;height:60px;background:#eef0f3;border:2px dotted #b5b5b5"></div>
<div class="a" style="left:1087.5px;top:597px;width:14px;height:4px;background:#aaa;"></div>
<div class="a" style="left:1111.5px;top:615px;width:20px;height:50px;background:#eef0f3;border:2px dotted #b5b5b5"></div>
<div class="a" style="left:1114.5px;top:607px;width:14px;height:4px;background:#aaa;"></div>
<div class="a" style="left:1138.5px;top:619px;width:20px;height:46px;background:#eef0f3;border:2px dotted #b5b5b5"></div>
<div class="a" style="left:1141.5px;top:611px;width:14px;height:4px;background:#aaa;"></div>
<div class="a" style="left:1032.5px;top:585px;width:16px;height:4px;background:#888;"></div>
<div class="a" style="left:985.5px;top:677px;width:6px;height:6px;background:#4a8cdb;"></div>
<div class="a" style="left:995.5px;top:678px;width:34px;height:4px;background:#bbb;"></div>
<div class="a" style="left:1039.5px;top:678px;width:34px;height:4px;background:#bbb;"></div>
<div class="a" style="left:1083.5px;top:678px;width:34px;height:4px;background:#bbb;"></div>
<div class="a" style="left:1127.5px;top:678px;width:34px;height:4px;background:#bbb;"></div>
<div class="t" style="left:536.00px;top:737.91px;font-size:13.1px;color:#1c1c1c;font-weight:normal;font-style:normal;">Average daily weekday travel rates vary based on the type of household. Generally, households with</div>
<div class="t" style="left:536.00px;top:756.61px;font-size:13.1px;color:#1c1c1c;font-weight:normal;font-style:normal;">children tend to make more trips than the number of trips an average household without children makes,</div>
<div class="t" style="left:536.00px;top:775.31px;font-size:13.1px;color:#1c1c1c;font-weight:normal;font-style:normal;">and this pattern is consistent across all survey regions. Households with more adults make more trips</div>
<div class="t" style="left:536.00px;top:794.01px;font-size:13.1px;color:#1c1c1c;font-weight:normal;font-style:normal;">(Figure 2-2). On a per person basis, the differences are smaller, with persons living in households with</div>
<div class="t" style="left:536.00px;top:812.71px;font-size:13.1px;color:#1c1c1c;font-weight:normal;font-style:normal;">children having a slightly higher per person trip rate and longer travel durations than households of both</div>
<div class="t" style="left:536.00px;top:831.41px;font-size:13.1px;color:#1c1c1c;font-weight:normal;font-style:normal;">sizes.</div>
<div class="a" style="left:531px;top:877px;width:616px;height:1.5px;background:#888;"></div>
<div class="t" style="left:534.00px;top:887.96px;font-size:9.5px;color:#777;font-weight:normal;font-style:normal;">Chapter 2 Page 14</div>
</div></div>
<div class="t" style="left:-68.50px;width:600px;text-align:center;top:707.69px;font-size:13.6px;color:#3a3a3a;font-weight:normal;font-style:normal;">15</div>
<div class="a" style="left:364px;top:158px;width:788px;height:599px;background:#e3e4e6;"></div>
<div class="a" style="left:478px;top:158px;width:659px;height:584px;background:#ffffff;"></div>
<div class="a" style="left:1137px;top:158px;width:15px;height:599px;background:#f8f8f9;"></div>
<div class="a" style="left:1137px;top:158px;width:1px;height:584px;background:#e8e8e9;"></div>
<div class="a" style="left:364px;top:742px;width:788px;height:15px;background:#f8f8f9;"></div>
<div class="a" style="left:364px;top:742px;width:773px;height:1px;background:#e8e8e9;"></div>
<div class="a" style="left:1141px;top:219px;width:8px;height:18px;background:#c2c2c4;border-radius:4px"></div>
<div class="a" style="left:368px;top:746px;width:618px;height:8px;background:#c4c4c6;border-radius:4px"></div>
<div class="a" style="left:478px;top:158px;width:659px;height:584px;overflow:hidden"><div class="a pg" style="left:-478px;top:-158px;width:1208px;height:1000px">
<div class="a" style="left:526px;top:61px;width:628px;height:38px;background:#4a8cdb;"></div>
<div class="t" style="left:534.00px;top:69.38px;font-size:22px;color:#fff;font-weight:bold;font-style:normal;">CHAPTER 2</div>
<div class="t" style="left:536.00px;top:116.92px;font-size:19px;color:#333;font-weight:normal;font-style:normal;">Who is traveling?</div>
<div class="t" style="left:543.00px;top:153.71px;font-size:13.1px;color:#1c1c1c;font-weight:normal;font-style:normal;">The average Oregon household surveyed<sup style="font-size:8px;vertical-align:4px">2</sup> is comprised of 2.4 persons and</div>
<div class="t" style="left:543.00px;top:171.76px;font-size:13.1px;color:#1c1c1c;font-weight:normal;font-style:normal;">owns 1.8 vehicles and 1.5 bicycles. These same households report an</div>
<div class="t" style="left:543.00px;top:189.81px;font-size:13.1px;color:#1c1c1c;font-weight:normal;font-style:normal;">average of 8.9 average weekday trips covering 61 miles and taking 168</div>
<div class="t" style="left:543.00px;top:207.86px;font-size:13.1px;color:#1c1c1c;font-weight:normal;font-style:normal;">minutes to complete. This equates to 3.7 trips per person, averaging 26</div>
<div class="t" style="left:543.00px;top:225.91px;font-size:13.1px;color:#1c1c1c;font-weight:normal;font-style:normal;">miles per day and each person spending 75 minutes per day traveling to</div>
<div class="t" style="left:543.00px;top:243.96px;font-size:13.1px;color:#1c1c1c;font-weight:normal;font-style:normal;">various activities.</div>
<div class="t" style="left:543.00px;top:272.31px;font-size:13.1px;color:#1c1c1c;font-weight:normal;font-style:normal;">The actual travel patterns vary based on where the household is located. As shown in Table 2-1,</div>
<div class="t" style="left:543.00px;top:290.36px;font-size:13.1px;color:#1c1c1c;font-weight:normal;font-style:normal;">households in the Salem/Keizer survey region report the highest level of trip making at 9.5 trips per day</div>
<div class="t" style="left:543.00px;top:308.41px;font-size:13.1px;color:#1c1c1c;font-weight:normal;font-style:normal;">while those in ODOT Region 3 and Central Lane reported the lowest rate of 8.6 trips per day. With</div>
<div class="t" style="left:543.00px;top:326.46px;font-size:13.1px;color:#1c1c1c;font-weight:normal;font-style:normal;">respect to distance traveled and the amount of time spent traveling on a typical weekday, the lowest</div>
<div class="t" style="left:543.00px;top:344.51px;font-size:13.1px;color:#1c1c1c;font-weight:normal;font-style:normal;">levels of travel is by households in the Medford survey region who report traveling an average of 41</div>
<div class="t" style="left:543.00px;top:362.56px;font-size:13.1px;color:#1c1c1c;font-weight:normal;font-style:normal;">miles over 128 minutes on a typical weekday. The highest levels of miles traveled are reported by</div>
<div class="t" style="left:543.00px;top:380.61px;font-size:13.1px;color:#1c1c1c;font-weight:normal;font-style:normal;">households in ODOT Region 4, while households in ODOT Region 2 and the Salem/Keizer survey</div>
<div class="t" style="left:543.00px;top:398.66px;font-size:13.1px;color:#1c1c1c;font-weight:normal;font-style:normal;">region report the longest trip durations. As a reminder, a survey region map is included in the</div>
<div class="t" style="left:543.00px;top:416.71px;font-size:13.1px;color:#1c1c1c;font-weight:normal;font-style:normal;">Introduction to this report.</div>
<div class="a" style="left:994px;top:160px;width:151px;height:3px;background:#4a8cdb;"></div>
<div class="a" style="left:994px;top:237.3px;width:151px;height:3.5px;background:#4a8cdb;"></div>
<div class="t" style="left:769.00px;width:600px;text-align:center;top:174.04px;font-size:12px;color:#222;font-weight:normal;font-style:italic;">Reminder:&nbsp; Time spent</div>
<div class="t" style="left:769.00px;width:600px;text-align:center;top:187.74px;font-size:12px;color:#222;font-weight:normal;font-style:italic;">traveling was self-reported</div>
<div class="t" style="left:769.00px;width:600px;text-align:center;top:201.44px;font-size:12px;color:#222;font-weight:normal;font-style:italic;">and respondents often</div>
<div class="t" style="left:769.00px;width:600px;text-align:center;top:215.14px;font-size:12px;color:#222;font-weight:normal;font-style:italic;">&ldquo;rounded up.&rdquo;</div>
<div class="t" style="left:685.70px;top:444.81px;font-size:13.1px;color:#111;font-weight:bold;font-style:normal;">Table 2-1:&nbsp; Household Trip Rates by Survey Region</div>
<div class="a" style="left:767px;top:505.5px;width:76px;height:16px;background:#e1e2e5;"></div>
<div class="a" style="left:767px;top:523.5px;width:76px;height:15.5px;background:#e1e2e5;"></div>
<div class="a" style="left:596px;top:459px;width:473px;height:2px;background:#c6c6c6;"></div>
<div class="a" style="left:596px;top:459px;width:1px;height:224px;background:#4a4a4a;"></div>
<div class="a" style="left:1068px;top:459px;width:1px;height:224px;background:#3a3a3a;"></div>
<div class="a" style="left:765px;top:459px;width:1px;height:224px;background:#6a6a6a;"></div>
<div class="a" style="left:843px;top:487px;width:1px;height:196px;background:#3a3a3a;"></div>
<div class="a" style="left:902px;top:459px;width:1px;height:224px;background:#3a3a3a;"></div>
<div class="a" style="left:969px;top:459px;width:1px;height:224px;background:#808080;"></div>
<div class="a" style="left:765px;top:486px;width:303px;height:2px;background:#c8c8c8;"></div>
<div class="a" style="left:596px;top:504px;width:473px;height:1px;background:#555;"></div>
<div class="a" style="left:596px;top:522px;width:473px;height:1px;background:#555;"></div>
<div class="a" style="left:596px;top:540px;width:473px;height:1px;background:#b8b8b8;"></div>
<div class="a" style="left:596px;top:558px;width:473px;height:1px;background:#8a8a8a;"></div>
<div class="a" style="left:596px;top:575px;width:473px;height:1px;background:#3c3c3c;"></div>
<div class="a" style="left:596px;top:593px;width:473px;height:1px;background:#3c3c3c;"></div>
<div class="a" style="left:596px;top:611px;width:473px;height:1px;background:#aaaaaa;"></div>
<div class="a" style="left:596px;top:628px;width:473px;height:1px;background:#777;"></div>
<div class="a" style="left:596px;top:646px;width:473px;height:1px;background:#333;"></div>
<div class="a" style="left:596px;top:665px;width:473px;height:1px;background:#333;"></div>
<div class="a" style="left:596px;top:681px;width:473px;height:2px;background:#2a2a2a;"></div>
<div class="t" style="left:380.80px;width:600px;text-align:center;top:476.91px;font-size:11.8px;color:#111;font-weight:bold;font-style:normal;">Survey Region</div>
<div class="t" style="left:533.60px;width:600px;text-align:center;top:468.11px;font-size:11.8px;color:#111;font-weight:bold;font-style:normal;">Household Trips</div>
<div class="t" style="left:504.00px;width:600px;text-align:center;top:491.11px;font-size:11.8px;color:#111;font-weight:bold;font-style:normal;">Sum (000)</div>
<div class="t" style="left:572.50px;width:600px;text-align:center;top:491.11px;font-size:11.8px;color:#111;font-weight:bold;font-style:normal;">Mean</div>
<div class="t" style="left:635.50px;width:600px;text-align:center;top:460.91px;font-size:11.8px;color:#111;font-weight:bold;font-style:normal;">Daily Trip</div>
<div class="t" style="left:635.50px;width:600px;text-align:center;top:474.31px;font-size:11.8px;color:#111;font-weight:bold;font-style:normal;">Miles</div>
<div class="t" style="left:718.50px;width:600px;text-align:center;top:460.91px;font-size:11.8px;color:#111;font-weight:bold;font-style:normal;">Daily Travel</div>
<div class="t" style="left:718.50px;width:600px;text-align:center;top:474.31px;font-size:11.8px;color:#111;font-weight:bold;font-style:normal;">Time (minutes)</div>
<div class="t" style="left:635.50px;width:600px;text-align:center;top:491.11px;font-size:11.8px;color:#111;font-weight:bold;font-style:normal;">Mean</div>
<div class="t" style="left:718.50px;width:600px;text-align:center;top:491.11px;font-size:11.8px;color:#111;font-weight:bold;font-style:normal;">Mean</div>
<div class="t" style="left:602.80px;top:509.03px;font-size:11.9px;color:#1c1c1c;font-weight:normal;font-style:normal;">ODOT Region 2</div>
<div class="t" style="left:602.80px;top:527.03px;font-size:11.9px;color:#1c1c1c;font-weight:normal;font-style:normal;">ODOT Region 3*</div>
<div class="t" style="left:602.80px;top:544.83px;font-size:11.9px;color:#1c1c1c;font-weight:normal;font-style:normal;">ODOT Region 4</div>
<div class="t" style="left:602.80px;top:562.53px;font-size:11.9px;color:#1c1c1c;font-weight:normal;font-style:normal;">ODOT Region 5</div>
<div class="t" style="left:602.80px;top:580.33px;font-size:11.9px;color:#1c1c1c;font-weight:normal;font-style:normal;">ODOT Region 1/ Portland***</div>
<div class="t" style="left:602.80px;top:597.93px;font-size:11.9px;color:#1c1c1c;font-weight:normal;font-style:normal;">Central Lane</div>
<div class="t" style="left:602.80px;top:615.53px;font-size:11.9px;color:#1c1c1c;font-weight:normal;font-style:normal;">Salem/Keizer</div>
<div class="t" style="left:602.80px;top:633.13px;font-size:11.9px;color:#1c1c1c;font-weight:normal;font-style:normal;">Medford/Rogue Valley</div>
<div class="t" style="left:602.80px;top:651.23px;font-size:11.9px;color:#1c1c1c;font-weight:normal;font-style:normal;">Bend</div>
<div class="t" style="left:602.80px;top:668.93px;font-size:11.9px;color:#1c1c1c;font-weight:normal;font-style:normal;">Statewide Total</div>
<div class="t" style="left:767.50px;top:507.82px;font-size:13.8px;color:#1c1c1c;font-weight:normal;font-style:normal;">176</div>
<div class="t" style="left:767.50px;top:525.62px;font-size:13.8px;color:#1c1c1c;font-weight:normal;font-style:normal;">256</div>
<div class="t" style="left:596.60px;top:684.78px;font-size:11.95px;color:#1c1c1c;font-weight:normal;font-style:normal;">See Introduction for a map of Survey Regions. *Corvallis and Albany metropolitan areas</div>
<div class="t" style="left:596.60px;top:698.48px;font-size:11.95px;color:#1c1c1c;font-weight:normal;font-style:normal;">included in ODOT Region 2. **Grants Pass included in ODOT Region 3. ***Defined as</div>
<div class="t" style="left:596.60px;top:712.18px;font-size:11.95px;color:#1c1c1c;font-weight:normal;font-style:normal;">Clackamas, Multnomah, and Washington counties.</div>
<div class="a" style="left:555px;top:805px;width:180px;height:1px;background:#999;"></div>
<div class="t" style="left:556.00px;top:813.03px;font-size:10.6px;color:#333;font-weight:normal;font-style:normal;"><sup style="font-size:6px">2</sup> All summaries of household data are derived from the Oregon Household Activity Survey, weighted and expanded to</div>
<div class="t" style="left:556.00px;top:827.03px;font-size:10.6px;color:#333;font-weight:normal;font-style:normal;">represent all households within each survey region. Totals may not sum due to rounding of individual estimates and</div>
<div class="t" style="left:556.00px;top:841.03px;font-size:10.6px;color:#333;font-weight:normal;font-style:normal;">values.</div>
<div class="a" style="left:531px;top:877px;width:616px;height:1.5px;background:#888;"></div>
<div class="t" style="left:534.00px;top:887.96px;font-size:9.5px;color:#777;font-weight:normal;font-style:normal;">Chapter 2 Page 13</div>
</div></div>
</div></div>
</body></html>
